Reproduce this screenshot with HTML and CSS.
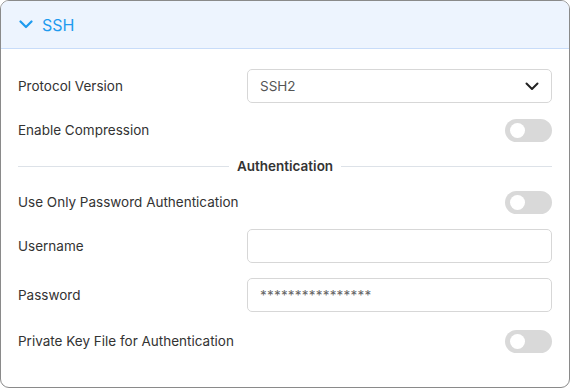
FILE: index.html
```html
<!DOCTYPE html>
<html lang="en">

<head>
    <meta charset="UTF-8">
    <meta name="viewport" content="width=device-width, initial-scale=1.0">
    <title>SSH Settings</title>
    <link rel="stylesheet" href="styles.css">
</head>

<body>
    <div class="panel">
        <div class="panel-header">
            <svg class="chevron" width="14" height="9" viewBox="0 0 14 9">
                <path d="M1.5 1.5 L7 7 L12.5 1.5" fill="none" stroke="currentColor" stroke-width="2.2" stroke-linecap="round" stroke-linejoin="round"/>
            </svg>
            <span>SSH</span>
        </div>
        <div class="panel-body">
            <div class="row">
                <label>Protocol Version</label>
                <div class="field select">
                    <span>SSH2</span>
                    <svg width="14" height="9" viewBox="0 0 14 9">
                        <path d="M1.5 1.5 L7 7 L12.5 1.5" fill="none" stroke="#222" stroke-width="2" stroke-linecap="round" stroke-linejoin="round"/>
                    </svg>
                </div>
            </div>
            <div class="row">
                <label>Enable Compression</label>
                <div class="toggle"><span class="knob"></span></div>
            </div>
            <div class="divider"><span>Authentication</span></div>
            <div class="row">
                <label>Use Only Password Authentication</label>
                <div class="toggle"><span class="knob"></span></div>
            </div>
            <div class="row">
                <label>Username</label>
                <div class="field"></div>
            </div>
            <div class="row spaced">
                <label>Password</label>
                <div class="field password">****************</div>
            </div>
            <div class="row">
                <label>Private Key File for Authentication</label>
                <div class="toggle"><span class="knob"></span></div>
            </div>
        </div>
    </div>
</body>

</html>
```

FILE: styles.css
```css
body {
    margin: 0;
    background-color: #fff;
    font-family: Inter, "Noto Sans", sans-serif;
    color: #333;
}

.panel {
    width: 570px;
    height: 388px;
    box-sizing: border-box;
    border: 1px solid #8a8a8a;
    border-radius: 9px;
    overflow: hidden;
}

.panel-header {
    height: 48px;
    box-sizing: border-box;
    background-color: #edf4fe;
    border-bottom: 1px solid #c8dcf9;
    display: flex;
    align-items: center;
    padding-left: 18px;
    gap: 9px;
    color: #1e9bef;
    font-size: 16px;
}

.chevron {
    color: #1e9bef;
}

.panel-body {
    padding: 20px 17px 0 17px;
}

.row {
    display: flex;
    justify-content: space-between;
    align-items: center;
    min-height: 34px;
    margin-bottom: 10px;
}

.row.spaced {
    margin-top: 15px;
    margin-bottom: 12px;
}

.row label {
    font-size: 13.5px;
    color: #333;
}

.field {
    width: 305px;
    height: 34px;
    box-sizing: border-box;
    border: 1px solid #d7d7d7;
    border-radius: 5px;
    padding: 0 12px;
    display: flex;
    align-items: center;
    font-size: 13.5px;
    color: #555;
}

.select {
    justify-content: space-between;
}

.password {
    color: #666;
    letter-spacing: 0.2px;
}

.toggle {
    width: 47px;
    height: 23px;
    border-radius: 12px;
    background-color: #d9d9d9;
    display: flex;
    align-items: center;
    padding-left: 5px;
    box-sizing: border-box;
}

.knob {
    width: 15px;
    height: 15px;
    border-radius: 50%;
    background-color: #fff;
}

.divider {
    display: flex;
    align-items: center;
    gap: 8px;
    height: 18px;
    margin: 0 0 10px 0;
    font-size: 13.5px;
    font-weight: 600;
    color: #333;
}

.divider::before,
.divider::after {
    content: "";
    flex: 1;
    height: 1px;
    background-color: #dde2e8;
}
```
